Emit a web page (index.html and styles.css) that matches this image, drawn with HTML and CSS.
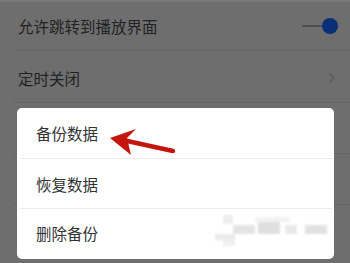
FILE: index.html
```html
<!DOCTYPE html>
<html lang="zh">
<head>
<meta charset="utf-8">
<link rel="stylesheet" href="styles.css">
</head>
<body>
<div class="screen">
  <div class="list">
    <div class="row row-first">
      <span class="label">允许跳转到播放界面</span>
      <span class="toggle"><span class="track"></span><span class="knob"></span></span>
    </div>
    <div class="row row-second">
      <span class="label">定时关闭</span>
      <svg class="chev" width="8" height="12" viewBox="0 0 8 12"><path d="M1.5 1.5 L6 6 L1.5 10.5" fill="none" stroke="#5a5a5a" stroke-width="1.3"/></svg>
    </div>
    <div class="row"></div>
    <div class="row"></div>
  </div>

  <div class="dialog">
    <div class="item">备份数据</div>
    <div class="item">恢复数据</div>
    <div class="item item-last">删除备份</div>
    <div class="wm">
      <span class="b b1"></span><span class="b b2"></span><span class="b b3"></span>
      <span class="b b4"></span><span class="b b5"></span><span class="b b6"></span>
      <span class="b b7"></span><span class="b b8"></span>
    </div>
  </div>

  <svg class="arrow" width="350" height="263" viewBox="0 0 350 263">
    <path d="M173 151 L118 139" stroke="#c4160f" stroke-width="4.5" stroke-linecap="round" fill="none"/>
    <path d="M110 138 L136 129 L127 138 L131 155 Z" fill="#c4160f"/>
  </svg>
</div>
</body>
</html>
```
FILE: styles.css
```css
html, body {
  margin: 0;
  padding: 0;
}
body {
  width: 350px;
  height: 263px;
  overflow: hidden;
  background: #6e6e6e;
  font-family: "Noto Sans CJK SC", "Noto Sans", sans-serif;
}
.screen {
  position: relative;
  width: 350px;
  height: 263px;
  border-top: 2px solid #777;
  box-sizing: border-box;
}
.list {
  display: flex;
  flex-direction: column;
}
.row {
  height: 50px;
  margin-left: 13px;
  padding-left: 5px;
  padding-right: 16px;
  display: flex;
  align-items: center;
  justify-content: space-between;
  border-bottom: 1px solid #656565;
}
.row-first {
  height: 48px;
}
.row-second {
  height: 52px;
  padding-top: 2px;
  box-sizing: border-box;
}
.label {
  font-size: 15.5px;
  color: #222222;
}
.toggle {
  display: flex;
  align-items: center;
  margin-right: -4px;
}
.track {
  width: 24px;
  height: 2px;
  background: #4e4e52;
  margin-right: -4px;
}
.knob {
  width: 16px;
  height: 16px;
  border-radius: 50%;
  background: #0a2e78;
}
.chev {
  margin-right: -2px;
}
.dialog {
  position: absolute;
  left: 17px;
  top: 106px;
  width: 317px;
  height: 151px;
  background: #ffffff;
  border-radius: 5px;
  display: flex;
  flex-direction: column;
  overflow: hidden;
}
.item {
  height: 50px;
  display: flex;
  align-items: center;
  padding-left: 16px;
  margin-left: 3px;
  margin-right: 1px;
  font-size: 15.5px;
  color: #333333;
  border-bottom: 1px solid #ececec;
  box-sizing: border-box;
}
.item:first-child {
  height: 51px;
}
.item-last {
  border-bottom: none;
  padding-bottom: 2px;
}
.wm {
  position: absolute;
  left: 196px;
  top: 104px;
  width: 120px;
  height: 45px;
  filter: blur(1.2px);
  opacity: 0.8;
}
.b {
  position: absolute;
  background: #e3e3e3;
}
.b1 { left: 10px; top: 3px; width: 10px; height: 9px; background: #eaeaea; }
.b2 { left: 20px; top: 13px; width: 22px; height: 9px; background: #dedede; }
.b3 { left: 45px; top: 10px; width: 22px; height: 12px; background: #d8d8d8; }
.b4 { left: 72px; top: 13px; width: 12px; height: 9px; background: #e4e4e4; }
.b5 { left: 92px; top: 13px; width: 22px; height: 9px; background: #dadada; }
.b6 { left: 2px; top: 22px; width: 20px; height: 6px; background: #e6e6e6; }
.b7 { left: 10px; top: 28px; width: 12px; height: 6px; background: #eeeeee; }
.b8 { left: 42px; top: 5px; width: 35px; height: 5px; background: #f0f0f0; }
.arrow {
  position: absolute;
  left: 0;
  top: -2px;
  pointer-events: none;
}
```
